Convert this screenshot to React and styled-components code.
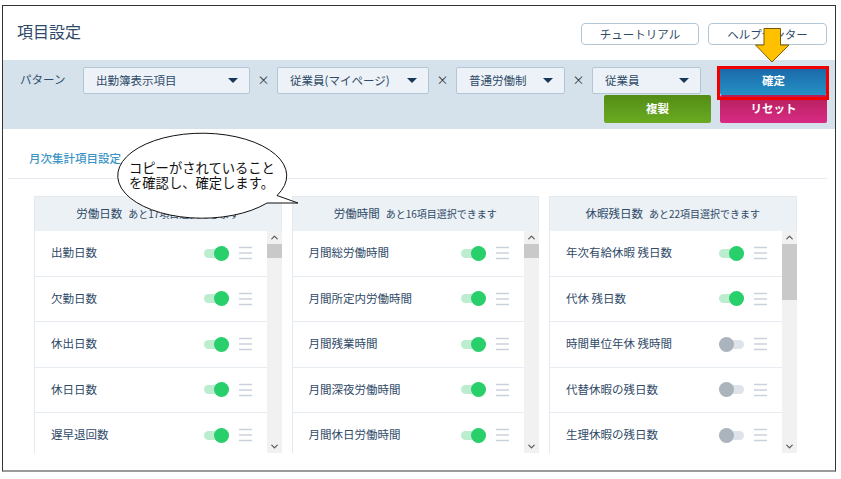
import React from "react";
import styled, { createGlobalStyle } from "styled-components";
import { ChevronUp, ChevronDown } from "lucide-react";

const GlobalStyle = createGlobalStyle`
  html, body {
    margin: 0;
    padding: 0;
    background: #fff;
  }
  body {
    font-family: "Noto Sans CJK JP", "Liberation Sans", sans-serif;
    color: #2f4a68;
  }
`;

const Page = styled.div`
  position: relative;
  width: 841px;
  height: 479px;
  padding: 5px 5px 7px 2px;
  box-sizing: border-box;
  overflow: hidden;
`;

const Frame = styled.div`
  height: 100%;
  box-sizing: border-box;
  border: 1px solid #333;
  border-bottom: 2px solid #9a9a9a;
  display: flex;
  flex-direction: column;
  overflow: hidden;
`;

const Header = styled.header`
  height: 54px;
  flex: none;
  display: flex;
  justify-content: space-between;
  padding: 17px 8px 0 14px;
  box-sizing: border-box;
`;

const Title = styled.h1`
  margin: 0;
  font-size: 16px;
  font-weight: 400;
  line-height: 16px;
  color: #2f4a68;
`;

const HeaderButtons = styled.div`
  display: flex;
  gap: 9px;
`;

const OutlineButton = styled.button`
  width: ${(p) => p.$width}px;
  height: 22px;
  padding: 0;
  box-sizing: border-box;
  border: 1px solid #b3c6d6;
  border-radius: 4px;
  background: #fff;
  font: inherit;
  font-size: 11.5px;
  color: #2f4a68;
`;

const PatternBar = styled.section`
  height: 69px;
  flex: none;
  padding: 7px 8px 0 17px;
  box-sizing: border-box;
  background: #d5e2eb;
  display: flex;
  flex-direction: column;
`;

const PatternRow = styled.div`
  display: flex;
  justify-content: space-between;
  height: 28px;
`;

const Selects = styled.div`
  display: flex;
  align-items: flex-start;
`;

const PatternLabel = styled.span`
  width: 63px;
  font-size: 11.5px;
  line-height: 24px;
`;

const SelectBox = styled.div`
  width: ${(p) => p.$width}px;
  height: 27px;
  box-sizing: border-box;
  padding: 0 11px 1px 12px;
  display: flex;
  align-items: center;
  justify-content: space-between;
  background: #ecf2f7;
  border: 1px solid #b3c6d6;
  border-radius: 2px;
  font-size: 11.5px;
  white-space: nowrap;
`;

const Caret = styled.i`
  width: 0;
  height: 0;
  border-left: 5px solid transparent;
  border-right: 5px solid transparent;
  border-top: 5px solid #16365a;
`;

const Times = styled.span`
  width: 27px;
  text-align: center;
  font-size: 12px;
  line-height: 26px;
  color: #333a42;
`;

const ActionRow = styled.div`
  display: flex;
  justify-content: flex-end;
  gap: 9px;
`;

const ActionButton = styled.button`
  position: relative;
  width: 107px;
  height: 28px;
  padding: 0 0 3px;
  border: none;
  border-radius: 2px;
  font: inherit;
  font-size: 11.5px;
  font-weight: 700;
  color: #fff;
  background: linear-gradient(${(p) => p.$from}, ${(p) => p.$to});
`;

const RedFrame = styled.span`
  position: absolute;
  top: -1px;
  left: -3px;
  right: -2px;
  bottom: -5px;
  border: 3px solid #f00000;
  z-index: 2;
`;

const Body = styled.main`
  flex: 1;
  min-height: 0;
  padding: 0 8px 0 5px;
  display: flex;
  flex-direction: column;
`;

const TabBar = styled.div`
  height: 50px;
  flex: none;
  box-sizing: border-box;
  padding: 20px 0 0 21px;
  border-bottom: 1px solid #e6ecf1;
  font-size: 11.5px;
  line-height: 18px;
  font-weight: 500;
  color: #3b94c5;
`;

const Cards = styled.div`
  display: flex;
  gap: 10px;
  margin-top: 17px;
  padding-left: 26px;
`;

const Card = styled.article`
  width: 247.5px;
  height: 257px;
  flex: none;
  display: flex;
  flex-direction: column;
  overflow: hidden;
`;

const CardHead = styled.div`
  height: 35px;
  flex: none;
  box-sizing: border-box;
  padding-bottom: 2px;
  display: flex;
  align-items: center;
  justify-content: center;
  gap: 6px;
  background: #ebf1f5;
  border: 1px solid #e3eaef;
  border-bottom: none;
  font-size: 11.5px;
  white-space: nowrap;
`;

const HeadNote = styled.span`
  font-size: 10px;
`;

const CardBody = styled.div`
  flex: 1;
  min-height: 0;
  display: flex;
`;

const List = styled.ul`
  flex: 1;
  margin: 0;
  padding: 0;
  list-style: none;
  border-left: 1px solid #e3eaef;
  overflow: hidden;
`;

const Row = styled.li`
  height: 45.5px;
  box-sizing: border-box;
  padding: 0 15px 0 16px;
  display: flex;
  align-items: center;
  border-bottom: 1px solid #e6ecf1;
  font-size: 11.5px;
`;

const RowLabel = styled.span`
  flex: 1;
  padding-bottom: 2px;
  white-space: nowrap;
`;

const Toggle = styled.span`
  position: relative;
  width: 25px;
  height: 15px;
  margin-right: 10px;
  display: flex;
  justify-content: ${(p) => (p.$on ? "flex-end" : "flex-start")};
  &::before {
    content: "";
    position: absolute;
    left: 0;
    right: 0;
    top: 3px;
    height: 9px;
    border-radius: 5px;
    background: ${(p) => (p.$on ? "#bcedcf" : "#dde3e8")};
  }
`;

const Knob = styled.span`
  position: relative;
  width: 15px;
  height: 15px;
  border-radius: 50%;
  background: ${(p) => (p.$on ? "#28cf6b" : "#abb3bc")};
`;

const Scrollbar = styled.div`
  width: 15px;
  flex: none;
  display: flex;
  flex-direction: column;
  background: #f1f1f1;
  color: #555;
`;

const ScrollArrow = styled.div`
  height: 13px;
  flex: none;
  display: flex;
  align-items: center;
  justify-content: center;
`;

const Thumb = styled.div`
  height: ${(p) => p.$height}px;
  flex: none;
  background: #c9c9c9;
`;

const ScrollTrack = styled.div`
  flex: 1;
`;

const ArrowMark = styled.svg`
  position: absolute;
  left: 754px;
  top: 27px;
`;

const Callout = styled.div`
  position: absolute;
  left: 117px;
  top: 132px;
  width: 183px;
  height: 88px;
`;

const CalloutText = styled.p`
  position: absolute;
  left: 12px;
  top: 28px;
  margin: 0;
  width: 150px;
  font-size: 13.3px;
  line-height: 15px;
  color: #111;
  white-space: nowrap;
`;

const DragHandle = () => (
  <svg width="13" height="14" viewBox="0 0 13 14" fill="none" stroke="#c9d2db" strokeWidth="1.5">
    <path d="M0 1.5h13M0 7h13M0 12.5h13" />
  </svg>
);

const columns = [
  {
    title: "労働日数",
    note: "あと17項目選択できます",
    thumb: 14,
    rows: [
      ["出勤日数", true],
      ["欠勤日数", true],
      ["休出日数", true],
      ["休日日数", true],
      ["遅早退回数", true],
    ],
  },
  {
    title: "労働時間",
    note: "あと16項目選択できます",
    thumb: 14,
    rows: [
      ["月間総労働時間", true],
      ["月間所定内労働時間", true],
      ["月間残業時間", true],
      ["月間深夜労働時間", true],
      ["月間休日労働時間", true],
    ],
  },
  {
    title: "休暇残日数",
    note: "あと22項目選択できます",
    thumb: 56,
    rows: [
      ["年次有給休暇 残日数", true],
      ["代休 残日数", true],
      ["時間単位年休 残時間", false],
      ["代替休暇の残日数", false],
      ["生理休暇の残日数", false],
    ],
  },
];

const selects = [
  ["出勤簿表示項目", 167],
  ["従業員(マイページ)", 152],
  ["普通労働制", 109],
  ["従業員", 109],
];

const App = () => (
  <Page>
    <GlobalStyle />
    <Frame>
      <Header>
        <Title>項目設定</Title>
        <HeaderButtons>
          <OutlineButton $width={118}>チュートリアル</OutlineButton>
          <OutlineButton $width={119}>ヘルプセンター</OutlineButton>
        </HeaderButtons>
      </Header>
      <PatternBar>
        <PatternRow>
          <Selects>
            <PatternLabel>パターン</PatternLabel>
            {selects.map(([label, width], i) => (
              <React.Fragment key={label}>
                {i > 0 && <Times>×</Times>}
                <SelectBox $width={width}>
                  {label}
                  <Caret />
                </SelectBox>
              </React.Fragment>
            ))}
          </Selects>
          <ActionButton $from="#1b66a8" $to="#2491c4">
            確定
            <RedFrame />
          </ActionButton>
        </PatternRow>
        <ActionRow>
          <ActionButton $from="#548c15" $to="#6aab22">複製</ActionButton>
          <ActionButton $from="#b31f5a" $to="#d92b85">リセット</ActionButton>
        </ActionRow>
      </PatternBar>
      <Body>
        <TabBar>月次集計項目設定</TabBar>
        <Cards>
          {columns.map((col) => (
            <Card key={col.title}>
              <CardHead>
                {col.title}
                <HeadNote>{col.note}</HeadNote>
              </CardHead>
              <CardBody>
                <List>
                  {col.rows.map(([label, on]) => (
                    <Row key={label}>
                      <RowLabel>{label}</RowLabel>
                      <Toggle $on={on}>
                        <Knob $on={on} />
                      </Toggle>
                      <DragHandle />
                    </Row>
                  ))}
                </List>
                <Scrollbar>
                  <ScrollArrow>
                    <ChevronUp size={11} strokeWidth={2.5} />
                  </ScrollArrow>
                  <Thumb $height={col.thumb} />
                  <ScrollTrack />
                  <ScrollArrow>
                    <ChevronDown size={11} strokeWidth={2.5} />
                  </ScrollArrow>
                </Scrollbar>
              </CardBody>
            </Card>
          ))}
        </Cards>
      </Body>
    </Frame>
    <ArrowMark width="36" height="36" viewBox="0 0 36 36">
      <path
        d="M10 1.5H26.5V18H35L18 35L1.5 18H10Z"
        fill="#ffc000"
        stroke="#7a5c00"
        strokeWidth="1"
      />
    </ArrowMark>
    <Callout>
      <svg width="183" height="88" viewBox="117 132 183 88">
        <path
          d="M277 195.5L298 203L267 203A84.5 42.5 0 1 1 277 195.5Z"
          fill="#fff"
          stroke="#111"
          strokeWidth="1"
        />
      </svg>
      <CalloutText>
        コピーがされていること
        <br />
        を確認し、確定します。
      </CalloutText>
    </Callout>
  </Page>
);

export default App;
